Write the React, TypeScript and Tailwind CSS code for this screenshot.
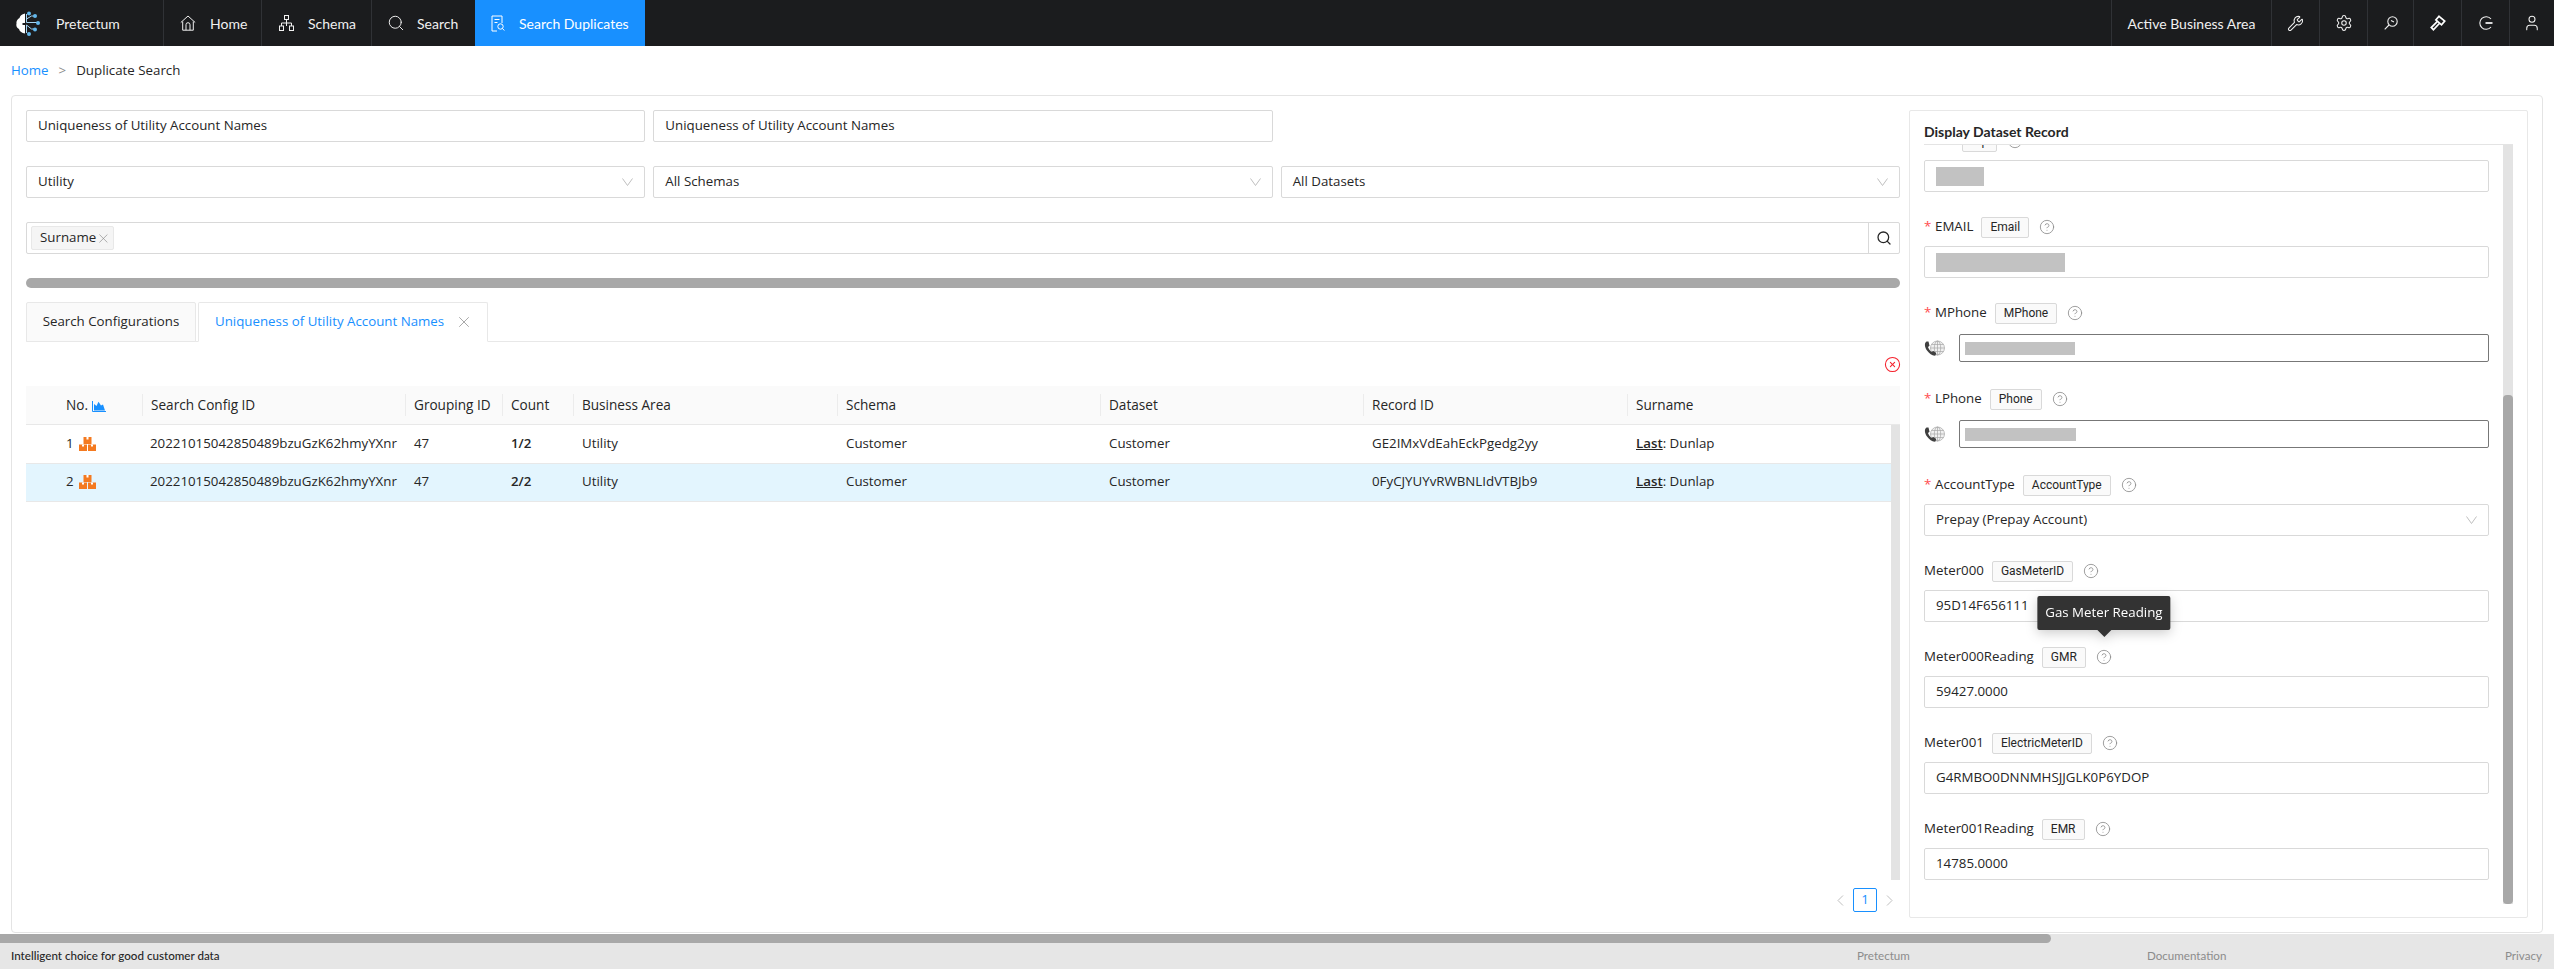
import { CircleHelp, CircleX, Search, Settings, User, Wrench, X } from "lucide-react"
import type { ReactNode } from "react"

const body = "font-['Open_Sans',sans-serif] text-[13.3px] text-[#262626]"
const lato = "font-['Lato',sans-serif]"

function LogoIcon() {
  return (
    <svg width="25" height="25" viewBox="0 0 25 25" fill="none">
      <path d="M10 2.500C6.500 3 5 5 4.500 7 2.300 8.200 1 10.500 1.500 12.500 .8 14.500 1.800 17 4 18c.5 2.500 3 4 6 4.500V14H7.500v-2H10z" fill="#fff" />
      <g stroke="#a5d5f4" strokeWidth="1">
        <path d="M11.500 3v8.500M11.500 22V14M11.500 11.500H23M11.500 14l5 4h3M11.500 8l5-3h3" />
      </g>
      <g fill="#62b7ec">
        <circle cx="14" cy="2.500" r="2" />
        <circle cx="20" cy="5" r="2" />
        <circle cx="23" cy="12" r="2" />
        <circle cx="20" cy="18.500" r="2" />
        <circle cx="14" cy="23" r="2" />
      </g>
    </svg>
  )
}

function HomeIcon() {
  return (
    <svg width="16" height="16" viewBox="0 0 16 16" fill="none" stroke="#f0f0f0" strokeWidth="1">
      <path d="M.8 7.500 8 1l7.200 6.500M2.700 6.500v8.700h10.600V6.500M6 15.200V9.700a2 2 0 0 1 4 0v5.500" />
    </svg>
  )
}

function SchemaIcon() {
  return (
    <svg width="15" height="16" viewBox="0 0 15 16" fill="none" stroke="#f0f0f0" strokeWidth="1">
      <rect x="5.500" y=".5" width="4" height="4" />
      <rect x=".5" y="11" width="4" height="4.500" />
      <rect x="10.500" y="11" width="4" height="4.500" />
      <path d="M7.500 4.500V11M2.500 11V8h10v3" />
    </svg>
  )
}

function FileSearchIcon() {
  return (
    <svg width="14" height="17" viewBox="0 0 14 17" fill="none" stroke="#fff" strokeWidth="1">
      <path d="M6 16H1V1h10v7M3.500 4.500h5M3.500 7.500h3" />
      <circle cx="9.500" cy="11.500" r="2.700" />
      <path d="m11.500 13.500 1.800 2" />
    </svg>
  )
}

function GaugeSearchIcon() {
  return (
    <svg width="14" height="14" viewBox="0 0 14 14" fill="none" stroke="#f0f0f0" strokeWidth="1.100">
      <circle cx="8.500" cy="5.500" r="4.700" />
      <path d="M5 9 .7 13.300M7 4.500l3 1.500" />
    </svg>
  )
}

function MalletIcon() {
  return (
    <svg width="16" height="16" viewBox="0 0 15 15" fill="none" stroke="#fff" strokeWidth="1.600">
      <path d="m8.500 1.200 5.300 4.500-3 3.500-5.300-4.500zM6.500 6.500 1.200 11.800l2 2 5.300-5.600" />
    </svg>
  )
}

function ExitIcon() {
  return (
    <svg width="14" height="14" viewBox="0 0 14 14" fill="none" stroke="#f0f0f0" strokeWidth="1.100">
      <path d="M12 3a6.300 6.300 0 1 0 0 8" />
      <path d="M6.500 7H13.500" strokeWidth="1.800" />
    </svg>
  )
}

function ChartIcon() {
  return (
    <svg width="14" height="11" viewBox="0 0 14 11" className="ml-[4px] inline-block">
      <path d="M.5 0v10.500H14" fill="none" stroke="#1890ff" />
      <path d="M2 9.500V3l2.500 2L6.500.8 9 4.500l2-1 2 6z" fill="#1890ff" />
    </svg>
  )
}

function BoxesIcon() {
  return (
    <svg width="17" height="14" viewBox="0 0 17 14" className="ml-[5px] inline-block">
      <path d="M4.500 0h8v7h-8zM0 7.500h8V14H0zM9 7.500h8V14H9z" fill="#f47a20" />
      <path d="M7.500 0h2v2.500h-2zM3 7.500h2v2H3zM12 7.500h2v2h-2z" fill="#fff" />
    </svg>
  )
}

function PhoneGlobeIcon() {
  return (
    <svg width="21" height="17" viewBox="0 0 21 17" fill="none" className="shrink-0">
      <g stroke="#a6a6a6" strokeWidth=".7">
        <circle cx="13.500" cy="8" r="7" fill="#f0f0f0" />
        <ellipse cx="13.500" cy="8" rx="3.200" ry="7" />
        <path d="M13.500 1v14M6.500 8h14M7.500 4.500h12M7.500 11.500h12" />
      </g>
      <path d="M2.500 1.500C.2 3 .5 7 3 10.500s6 5.700 8.500 5l.7-2.500-3-2-1.500 1C6 11 4.500 8.500 4 7l1.500-1.200L4.500 1.500z" fill="#404040" />
    </svg>
  )
}

function SelectArrow() {
  return (
    <svg width="11" height="8" viewBox="0 0 11 8" fill="none" stroke="#bfbfbf" className="shrink-0">
      <path d="M.5.5 5.500 7.500l5-7" />
    </svg>
  )
}

function PageArrow({ right = false }: { right?: boolean }) {
  return (
    <svg width="7" height="11" viewBox="0 0 7 11" fill="none" stroke="#bfbfbf">
      <path d={right ? "M1 .5l5 5-5 5" : "M6 .5l-5 5 5 5"} />
    </svg>
  )
}

function Box({ children, className = "" }: { children?: ReactNode; className?: string }) {
  return (
    <div className={`flex h-[32px] items-center rounded-[2px] border border-[#d9d9d9] bg-white px-[11px] ${className}`}>
      {children}
    </div>
  )
}

function SelectBox({ value }: { value: string }) {
  return (
    <Box className="justify-between">
      <span>{value}</span>
      <SelectArrow />
    </Box>
  )
}

function NavCell({ children, className = "" }: { children: ReactNode; className?: string }) {
  return <div className={`flex h-full items-center ${className}`}>{children}</div>
}

function IconCell({ children, w = "w-[48px]" }: { children: ReactNode; w?: string }) {
  return <div className={`flex h-full items-center justify-center border-l border-[#303236] ${w}`}>{children}</div>
}

function TopBar() {
  return (
    <header className={`flex h-[46px] shrink-0 bg-[#1b1c1e] text-[14px] text-[#f0f0f0] ${lato}`}>
      <NavCell className="w-[164px] gap-[16px] border-r border-[#303236] pl-[15px]">
        <LogoIcon />
        <span>Pretectum</span>
      </NavCell>
      <NavCell className="w-[98px] gap-[14px] border-r border-[#303236] pl-[16px]">
        <HomeIcon />
        <span>Home</span>
      </NavCell>
      <NavCell className="w-[110px] gap-[14px] border-r border-[#303236] pl-[17px]">
        <SchemaIcon />
        <span>Schema</span>
      </NavCell>
      <NavCell className="w-[103px] gap-[12px] pl-[15px]">
        <Search size={18} strokeWidth={1.3} color="#f0f0f0" />
        <span>Search</span>
      </NavCell>
      <NavCell className="w-[170px] gap-[14px] bg-[#1890ff] pl-[16px] text-white">
        <FileSearchIcon />
        <span>Search Duplicates</span>
      </NavCell>
      <div className="ml-auto flex h-full">
        <IconCell w="w-[160px]">Active Business Area</IconCell>
        <IconCell><Wrench size={17} strokeWidth={1.5} color="#f0f0f0" /></IconCell>
        <IconCell><Settings size={18} strokeWidth={1.4} color="#f0f0f0" /></IconCell>
        <IconCell w="w-[46px]"><GaugeSearchIcon /></IconCell>
        <IconCell><MalletIcon /></IconCell>
        <IconCell><ExitIcon /></IconCell>
        <IconCell w="w-[45px]"><User size={18} strokeWidth={1.4} color="#f0f0f0" /></IconCell>
      </div>
    </header>
  )
}

const columns = ["No.", "Search Config ID", "Grouping ID", "Count", "Business Area", "Schema", "Dataset", "Record ID", "Surname"]
const rows = [
  { no: 1, count: "1/2", record: "GE2IMxVdEahEckPgedg2yy", selected: false },
  { no: 2, count: "2/2", record: "0FyCJYUYvRWBNLIdVTBJb9", selected: true },
]

function ResultsTable() {
  return (
    <div className="flex min-h-0 flex-1 flex-col">
      <div className="grid h-[39px] shrink-0 grid-cols-[116px_263px_97px_71px_264px_263px_263px_264px_273px] border-b border-[#e8e8e8] bg-[#fafafa] text-[13.6px] font-medium">
        {columns.map((c, i) => (
          <div key={c} className="flex items-center">
            {i === 0 ? (
              <span className="pl-[40px]">No.<ChartIcon /></span>
            ) : (
              <span className="flex h-[22px] items-center border-l border-[#ececec] pl-[8px]">{c}</span>
            )}
          </div>
        ))}
      </div>
      <div className="flex h-[455px] shrink-0">
        <div className="flex-1">
          {rows.map((r) => (
            <div
              key={r.no}
              className={`grid h-[38.5px] grid-cols-[116px_263px_97px_71px_264px_263px_263px_264px_264px] items-center border-b border-[#e8e8e8] ${r.selected ? "bg-[#e3f5fe]" : ""}`}
            >
              <div className="flex items-center pl-[40px]">{r.no}<BoxesIcon /></div>
              <div className="pl-[8px]">20221015042850489bzuGzK62hmyYXnr</div>
              <div className="pl-[9px]">47</div>
              <div className="pl-[9px] font-semibold">{r.count}</div>
              <div className="pl-[9px]">Utility</div>
              <div className="pl-[9px]">Customer</div>
              <div className="pl-[9px]">Customer</div>
              <div className="pl-[9px]">{r.record}</div>
              <div className="pl-[9px]"><span className="font-semibold underline">Last</span>: Dunlap</div>
            </div>
          ))}
        </div>
        <div className="w-[9px] bg-[#e3e3e3]" />
      </div>
      <div className="mt-[8px] flex h-[24px] items-center justify-end pr-[7px]">
        <PageArrow />
        <span className="mx-[9px] flex h-[24px] w-[24px] items-center justify-center rounded-[2px] border border-[#1890ff] text-[#1890ff]">1</span>
        <PageArrow right />
      </div>
    </div>
  )
}

function LeftColumn() {
  return (
    <div className="flex w-[1874px] shrink-0 flex-col">
      <div className="grid grid-cols-3 gap-x-[8px] gap-y-[24px]">
        <Box>Uniqueness of Utility Account Names</Box>
        <Box>Uniqueness of Utility Account Names</Box>
        <div />
        <SelectBox value="Utility" />
        <SelectBox value="All Schemas" />
        <SelectBox value="All Datasets" />
      </div>
      <div className="mt-[24px] flex h-[32px] rounded-[2px] border border-[#d9d9d9]">
        <div className="flex flex-1 items-center pl-[4px]">
          <span className="flex h-[24px] w-[83px] items-center justify-between rounded-[2px] border border-[#e8e8e8] bg-[#f5f5f5] pl-[8px] pr-[2px]">
            Surname
            <X size={15} strokeWidth={1} color="#7f7f7f" />
          </span>
        </div>
        <div className="flex w-[31px] items-center justify-center border-l border-[#d9d9d9]">
          <Search size={16} strokeWidth={1.9} color="#262626" />
        </div>
      </div>
      <div className="mt-[24px] h-[10px] rounded-[5px] bg-[#a8a8a8]" />
      <div className="mt-[14px] flex h-[40px] shrink-0 gap-[2px] border-b border-[#e8e8e8]">
        <div className="flex h-[40px] w-[170px] items-center justify-center rounded-t-[2px] border border-[#e8e8e8] bg-[#fafafa]">
          Search Configurations
        </div>
        <div className="flex h-[40px] w-[290px] items-center rounded-t-[2px] border border-b-white border-[#e8e8e8] bg-white pl-[16px] text-[#1890ff]">
          Uniqueness of Utility Account Names
          <X size={18} strokeWidth={1} color="#8c8c8c" className="ml-[11px]" />
        </div>
      </div>
      <div className="flex h-[44px] shrink-0 items-center justify-end">
        <CircleX size={17} strokeWidth={1.5} color="#f5222d" className="translate-x-[1px]" />
      </div>
      <ResultsTable />
    </div>
  )
}

type Field = { label: string; tag: string; value?: string; required?: boolean; mask?: string; phone?: boolean; select?: boolean; tip?: string }

const fields: Field[] = [
  { label: "ZIP", tag: "Zip", required: true, mask: "w-[48px]" },
  { label: "EMAIL", tag: "Email", required: true, mask: "w-[129px]" },
  { label: "MPhone", tag: "MPhone", required: true, phone: true, mask: "w-[110px]" },
  { label: "LPhone", tag: "Phone", required: true, phone: true, mask: "w-[111px]" },
  { label: "AccountType", tag: "AccountType", required: true, select: true, value: "Prepay (Prepay Account)" },
  { label: "Meter000", tag: "GasMeterID", value: "95D14F656111" },
  { label: "Meter000Reading", tag: "GMR", value: "59427.0000", tip: "Gas Meter Reading" },
  { label: "Meter001", tag: "ElectricMeterID", value: "G4RMBO0DNNMHSJJGLK0P6YDOP" },
  { label: "Meter001Reading", tag: "EMR", value: "14785.0000" },
]

function Tooltip({ text }: { text: string }) {
  return (
    <div className="absolute bottom-full left-1/2 mb-[12px] -translate-x-1/2 drop-shadow-[0_3px_6px_rgba(0,0,0,0.2)]">
      <div className="flex h-[34px] items-center whitespace-nowrap rounded-[2px] bg-[#333] px-[8px] text-white">{text}</div>
      <div className="mx-auto h-0 w-0 border-x-[7px] border-t-[7px] border-x-transparent border-t-[#333]" />
    </div>
  )
}

function FieldRow({ field }: { field: Field }) {
  return (
    <div className="h-[86px]">
      <div className="flex h-[22px] items-center">
        {field.required && <span className="w-[11px] text-[#ff4d4f]">*</span>}
        <span>{field.label}</span>
        <span className="ml-[8px] flex h-[21px] items-center rounded-[2px] border border-[#d9d9d9] bg-[#fafafa] px-[8px] font-['Roboto',sans-serif] text-[12px]">{field.tag}</span>
        <span className="relative ml-[10px] flex">
          <CircleHelp size={16} strokeWidth={1.25} color="#8c8c8c" />
          {field.tip && <Tooltip text={field.tip} />}
        </span>
      </div>
      {field.phone ? (
        <div className="mt-[10px] flex h-[28px] items-center justify-between">
          <PhoneGlobeIcon />
          <div className="flex h-[28px] w-[530px] items-center rounded-[2px] border border-[#777] pl-[5px]">
            <div className={`h-[13px] bg-[#c2c2c2] ${field.mask}`} />
          </div>
        </div>
      ) : (
        <div className="mt-[8px]">
          <Box className={field.select ? "justify-between" : ""}>
            {field.value}
            {field.mask && <div className={`h-[19px] bg-[#c2c2c2] ${field.mask}`} />}
            {field.select && <SelectArrow />}
          </Box>
        </div>
      )}
    </div>
  )
}

function RecordPanel() {
  return (
    <aside className="flex w-[619px] shrink-0 flex-col rounded-[2px] border border-[#e8e8e8] pl-[14px] pr-[14px]">
      <div className={`flex h-[34px] shrink-0 items-center border-b border-[#e4e4e4] pt-[8px] text-[14px] font-bold text-[#262626] ${lato}`}>
        Display Dataset Record
      </div>
      <div className="flex h-[759px] shrink-0 gap-[14px]">
        <div className="min-w-0 flex-1 overflow-hidden">
          <div className="-mt-[15px]">
            {fields.map((f) => <FieldRow key={f.label} field={f} />)}
          </div>
        </div>
        <div className="flex w-[10px] flex-col justify-end bg-[#e3e3e3]">
          <div className="h-[509px] rounded-[4px] bg-[#a8a8a8]" />
        </div>
      </div>
    </aside>
  )
}

export default function App() {
  return (
    <div className={`flex h-[969px] w-[2554px] flex-col overflow-hidden bg-white ${body}`}>
      <TopBar />
      <div className="flex h-[49px] shrink-0 items-center gap-[10px] pl-[11px]">
        <span className="text-[#1890ff]">Home</span>
        <span className="text-[#8c8c8c]">&gt;</span>
        <span>Duplicate Search</span>
      </div>
      <main className="mx-[11px] flex h-[838px] shrink-0 gap-[9px] rounded-[4px] border border-[#e4e4e4] p-[14px]">
        <LeftColumn />
        <RecordPanel />
      </main>
      <div className="mt-[1px] flex-1 bg-[#e6e6e6]">
        <div className="h-[9px] w-[2051px] rounded-r-[5px] bg-[#a8a8a8]" />
        <footer className={`grid h-[26px] grid-cols-[1846px_290px_358px_1fr] items-center pl-[11px] text-[11.6px] text-[#8c8c8c] ${lato}`}>
          <span className="font-medium text-[#262626]">Intelligent choice for good customer data</span>
          <span>Pretectum</span>
          <span>Documentation</span>
          <span>Privacy</span>
        </footer>
      </div>
    </div>
  )
}
